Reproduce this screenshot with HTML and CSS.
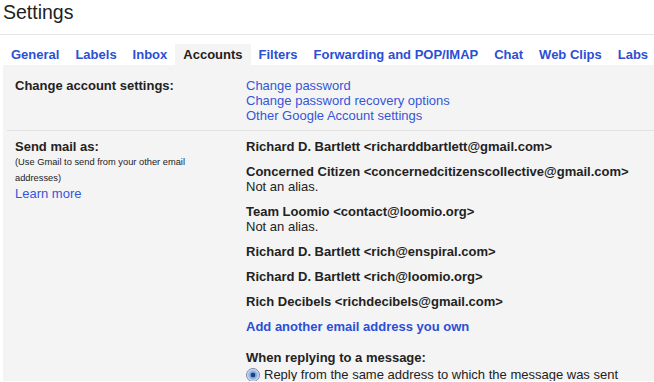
FILE: index.html
```html
<!DOCTYPE html>
<html>
<head>
<meta charset="utf-8">
<link rel="stylesheet" href="styles.css">
</head>
<body>
<div class="title">Settings</div>
<div class="tabs">
  <a class="tab">General</a>
  <a class="tab">Labels</a>
  <a class="tab">Inbox</a>
  <a class="tab active">Accounts</a>
  <a class="tab">Filters</a>
  <a class="tab">Forwarding and POP/IMAP</a>
  <a class="tab">Chat</a>
  <a class="tab">Web Clips</a>
  <a class="tab">Labs</a>
</div>
<div class="panel">
  <div class="row first">
    <div class="label"><b>Change account settings:</b></div>
    <div class="value">
      <a class="link">Change password</a>
      <a class="link">Change password recovery options</a>
      <a class="link">Other Google Account settings</a>
    </div>
  </div>
  <div class="row second">
    <div class="label">
      <b>Send mail as:</b>
      <div class="small">(Use Gmail to send from your other email addresses)</div>
      <a class="link">Learn more</a>
    </div>
    <div class="value">
      <div class="entry"><b>Richard D. Bartlett &lt;richarddbartlett@gmail.com&gt;</b></div>
      <div class="entry"><b>Concerned Citizen &lt;concernedcitizenscollective@gmail.com&gt;</b><div>Not an alias.</div></div>
      <div class="entry"><b>Team Loomio &lt;contact@loomio.org&gt;</b><div>Not an alias.</div></div>
      <div class="entry"><b>Richard D. Bartlett &lt;rich@enspiral.com&gt;</b></div>
      <div class="entry"><b>Richard D. Bartlett &lt;rich@loomio.org&gt;</b></div>
      <div class="entry"><b>Rich Decibels &lt;richdecibels@gmail.com&gt;</b></div>
      <div class="entry add"><a class="link bold">Add another email address you own</a></div>
      <div class="reply-head"><b>When replying to a message:</b></div>
      <div class="radio-row"><span class="radio"></span><span>Reply from the same address to which the message was sent</span></div>
    </div>
  </div>
</div>
</body>
</html>
```
FILE: styles.css
```css
html, body {
  margin: 0;
  padding: 0;
  background: #fff;
  overflow: hidden;
}
body {
  font-family: "Liberation Sans", Arial, sans-serif;
  font-size: 13px;
  color: #222;
}
.title {
  font-size: 19.5px;
  line-height: 24px;
  padding: 0 0 0 3px;
  height: 35px;
  box-sizing: border-box;
  border-bottom: 1px solid #e5e5e5;
  color: #222;
}
.tabs {
  display: flex;
  margin-top: 9px;
  padding-left: 3px;
  white-space: nowrap;
}
.tab {
  font-weight: bold;
  color: #2c4fd4;
  padding: 0 8px;
  height: 21px;
  line-height: 21px;
}
.tab.active {
  background: #f4f4f4;
  color: #222;
}
.panel {
  background: #f4f4f4;
  margin-left: 3px;
  padding-left: 4px;
  height: 316px;
  overflow: hidden;
}
.row {
  display: flex;
  line-height: 15px;
}
.row.first {
  padding-top: 13px;
  padding-bottom: 7px;
  border-bottom: 1px solid #e2e2e2;
}
.row.second {
  padding-top: 8px;
}
.label {
  width: 231px;
  padding-left: 8px;
  flex: none;
}
.value {
  display: flex;
  flex-direction: column;
  white-space: nowrap;
}
.link {
  display: block;
  color: #3456d8;
}
.link.bold {
  font-weight: bold;
  color: #2c4fd4;
}
.small {
  font-size: 9.3px;
  line-height: 16px;
  width: 180px;
}
.entry {
  margin-bottom: 10px;
}
.entry.add {
  margin-bottom: 16px;
}
.radio-row {
  display: flex;
  align-items: center;
  margin-top: 2px;
}
.radio {
  width: 12px;
  height: 12px;
  border-radius: 50%;
  border: 1px solid #7a8ba8;
  background: radial-gradient(circle at 50% 50%, #1e3f7a 0 2px, #6f9ad8 2.5px, #d6e4f7 6px);
  margin-right: 4px;
  flex: none;
}
```
